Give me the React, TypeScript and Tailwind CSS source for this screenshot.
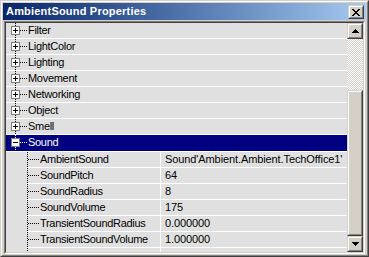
import React from 'react';

const CATEGORIES = ['Filter', 'LightColor', 'Lighting', 'Movement', 'Networking', 'Object', 'Smell'];

const SOUND_PROPS: [string, string][] = [
  ['AmbientSound', "Sound'Ambient.Ambient.TechOffice1'"],
  ['SoundPitch', '64'],
  ['SoundRadius', '8'],
  ['SoundVolume', '175'],
  ['TransientSoundRadius', '0.000000'],
  ['TransientSoundVolume', '1.000000'],
];

// Classic raised 3D frame (buttons, thumb)
function Raised({ className, children }: { className?: string; children?: React.ReactNode }) {
  return (
    <div className={`border border-t-[#d4d0c8] border-l-[#d4d0c8] border-r-[#404040] border-b-[#404040] bg-[#d4d0c8] ${className ?? ''}`}>
      <div className="flex h-full w-full items-center justify-center border border-t-white border-l-white border-r-[#808080] border-b-[#808080]">
        {children}
      </div>
    </div>
  );
}

function CloseGlyph() {
  const rows = ['XX....XX', '.XX..XX.', '..XXXX..', '...XX...', '..XXXX..', '.XX..XX.', 'XX....XX'];
  return (
    <svg width="8" height="7" viewBox="0 0 8 7" shapeRendering="crispEdges">
      {rows.flatMap((r, y) =>
        r.split('').map((c, x) => (c === 'X' ? <rect key={`${x}-${y}`} x={x} y={y} width="1" height="1" fill="#000" /> : null)),
      )}
    </svg>
  );
}

function Arrow({ up }: { up?: boolean }) {
  return (
    <svg width="7" height="4" viewBox="0 0 7 4" shapeRendering="crispEdges">
      <polygon points={up ? '3.5,0 7,4 0,4' : '0,0 7,0 3.5,4'} fill="#000" />
    </svg>
  );
}

// Tree glyph for top level rows: trunk line, +/- box, branch to the label
function TopGlyph({ open, selected, h }: { open?: boolean; selected?: boolean; h: number }) {
  const line = selected ? '#ffffff' : '#000000';
  return (
    <svg width="22" height={h} viewBox={`0 0 22 ${h}`} shapeRendering="crispEdges" className="shrink-0">
      <line x1="9.5" y1="0" x2="9.5" y2={h} stroke={line} strokeDasharray="1 1" />
      <line x1="14" y1="7.5" x2="22" y2="7.5" stroke={line} strokeDasharray="1 1" />
      <rect x="5.5" y="3.5" width="8" height="8" fill="#fff" stroke="#808080" />
      <rect x="7" y="7" width="5" height="1" fill="#000" />
      {!open && <rect x="9" y="5" width="1" height="5" fill="#000" />}
    </svg>
  );
}

function ChildGlyph() {
  return (
    <svg width="12" height="16" viewBox="0 0 12 16" shapeRendering="crispEdges" className="shrink-0">
      <line x1="0.5" y1="0" x2="0.5" y2="16" stroke="#000" strokeDasharray="1 1" />
      <line x1="1" y1="7.5" x2="12" y2="7.5" stroke="#000" strokeDasharray="1 1" />
    </svg>
  );
}

export default function App() {
  return (
    <div className="h-[257px] w-[369px] border border-t-[#d4d0c8] border-l-[#d4d0c8] border-r-[#404040] border-b-[#404040] bg-[#d4d0c8] font-['Liberation_Sans',Arial,sans-serif]">
      <div className="flex h-full flex-col border border-t-white border-l-white border-r-[#808080] border-b-[#808080] p-px">
        {/* Caption */}
        <div className="flex h-[17px] shrink-0 items-start bg-linear-to-r from-[#0a246a] to-[#a6caf0]">
          <span className="pl-[3px] text-[11px] leading-[16px] font-bold tracking-[0.2px] text-white">
            AmbientSound Properties
          </span>
          <Raised className="mt-[2px] mr-[2px] ml-auto h-[14px] w-[16px]">
            <CloseGlyph />
          </Raised>
        </div>

        {/* Client area */}
        <div className="mx-px mt-px flex min-h-0 flex-1 border border-t-[#808080] border-l-[#808080] border-r-white border-b-white">
          <div className="flex min-h-0 flex-1 border border-t-[#404040] border-l-[#404040] border-r-[#d4d0c8] border-b-[#d4d0c8]">
            {/* Property list */}
            <div className="min-w-0 flex-1 overflow-hidden bg-[#e0e0e0] text-[11px] leading-[15px] tracking-[-0.3px] text-black">
              {CATEGORIES.map((c) => (
                <div key={c} className="flex h-[16px] items-start border-b border-white">
                  <TopGlyph h={15} />
                  <span>{c}</span>
                </div>
              ))}

              <div className="flex h-[17px] items-start border-b border-white bg-[#000080] text-white">
                <TopGlyph open selected h={16} />
                <span>Sound</span>
              </div>

              {SOUND_PROPS.map(([name, value]) => (
                <div key={name} className="flex h-[16px]">
                  <div className="w-[21px] shrink-0" />
                  <div className="flex w-[133px] shrink-0 items-start border-b border-white">
                    <ChildGlyph />
                    <span className="pl-px">{name}</span>
                  </div>
                  <div className="min-w-0 flex-1 border-b border-l border-white pl-[4px] tracking-[-0.1px] whitespace-nowrap">
                    {value}
                  </div>
                </div>
              ))}

              <div className="flex h-[4px]">
                <div className="w-[21px] shrink-0" />
                <div className="w-[133px] shrink-0 overflow-hidden">
                  <ChildGlyph />
                </div>
                <div className="flex-1 border-l border-white" />
              </div>
            </div>

            {/* Vertical scrollbar */}
            <div className="flex w-[16px] shrink-0 flex-col">
              <Raised className="h-[16px] w-[16px] shrink-0">
                <Arrow up />
              </Raised>
              <div className="flex min-h-0 flex-1 flex-col">
                <div className="flex-1 bg-[repeating-conic-gradient(#d4d0c8_0%_25%,#ffffff_0%_50%)] bg-[length:2px_2px]" />
                <Raised className="h-[146px] w-[16px] shrink-0" />
              </div>
              <Raised className="h-[16px] w-[16px] shrink-0">
                <Arrow />
              </Raised>
            </div>
          </div>
        </div>
      </div>
    </div>
  );
}
